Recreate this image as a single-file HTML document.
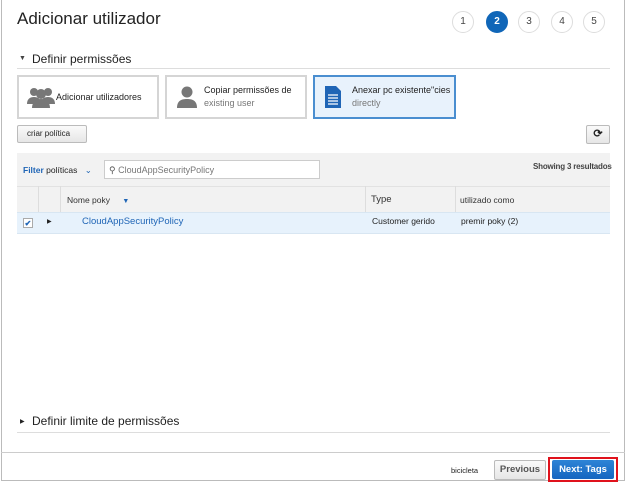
<!DOCTYPE html>
<html><head><style>
*{box-sizing:border-box}
body{margin:0;width:626px;height:482px;background:#fff;font-family:"Liberation Sans",sans-serif;color:#222;position:relative;overflow:hidden}
.a{position:absolute}
.frame{left:1px;top:-2px;width:624px;height:483px;border:1px solid #bbb}
.step{width:22px;height:22px;border-radius:50%;border:1px solid #ddd;font-size:10px;color:#444;text-align:center;line-height:20px;top:11px}
.card{top:75px;height:44px;border:2px solid #d5d5d5;background:#fff;font-size:9px}
.btn{border:1px solid #bbb;border-radius:2px;background:linear-gradient(#fafafa,#e6e6e6);font-size:8px}
.hd{font-size:8.5px;color:#333}
</style></head><body>
<div class="a frame"></div>
<div class="a" style="left:17px;top:9px;font-size:17px;color:#222">Adicionar utilizador</div>
<div class="a step" style="left:452px">1</div>
<div class="a step" style="left:486px;background:#1066b8;border-color:#1066b8;color:#fff;font-weight:bold">2</div>
<div class="a step" style="left:518px">3</div>
<div class="a step" style="left:551px">4</div>
<div class="a step" style="left:583px">5</div>

<div class="a" style="left:19px;top:55px;font-size:7px;color:#444">▼</div>
<div class="a" style="left:32px;top:52px;font-size:12px">Definir permissões</div>
<div class="a" style="left:17px;top:68px;width:593px;height:1px;background:#ddd"></div>

<div class="a card" style="left:17px;width:142px">
 <svg class="a" style="left:8px;top:9px" width="28" height="22" viewBox="0 0 28 22"><g fill="#777"><circle cx="7" cy="6" r="4"/><circle cx="21" cy="6" r="4"/><path d="M0 18c0-5 3-7 7-7s7 2 7 7z"/><path d="M14 18c0-5 3-7 7-7s7 2 7 7z"/><circle cx="14" cy="8" r="5"/><path d="M5 22c0-6 4-9 9-9s9 3 9 9z"/></g></svg>
 <div class="a" style="left:37px;top:15px">Adicionar utilizadores</div>
</div>
<div class="a card" style="left:165px;width:142px">
 <svg class="a" style="left:10px;top:9px" width="20" height="22" viewBox="0 0 20 22"><g fill="#777"><circle cx="10" cy="6" r="5.5"/><path d="M0 22c0-7 4-9 10-9s10 2 10 9z"/></g></svg>
 <div class="a" style="left:37px;top:8px">Copiar permissões de</div>
 <div class="a" style="left:37px;top:21px;color:#777">existing user</div>
</div>
<div class="a card" style="left:313px;width:143px;border-color:#4a8ed0;background:#e8f2fc">
 <svg class="a" style="left:10px;top:9px" width="16" height="22" viewBox="0 0 16 22"><path d="M0 0h11l5 5v17H0z" fill="#1f65b6"/><g stroke="#fff" stroke-width="1.3"><path d="M3 9h10M3 12h10M3 15h10M3 18h10"/></g></svg>
 <div class="a" style="left:37px;top:8px">Anexar pc existente"cies</div>
 <div class="a" style="left:37px;top:21px;color:#777">directly</div>
</div>

<div class="a btn" style="left:17px;top:125px;width:70px;height:18px;padding:3px 0 0 9px">criar política</div>
<div class="a btn" style="left:586px;top:125px;width:24px;height:19px;text-align:center;font-size:11px;line-height:16px;font-weight:bold">⟳</div>

<div class="a" style="left:17px;top:153px;width:593px;height:33px;background:#f2f2f2"></div>
<div class="a" style="left:23px;top:165px;font-size:8.5px"><b style="color:#1f65b6">Filter</b> políticas <span style="color:#1f65b6;margin-left:5px">⌄</span></div>
<div class="a" style="left:104px;top:160px;width:216px;height:19px;background:#fff;border:1px solid #ccc;font-size:9px;color:#777;padding:4px 0 0 4px"><span style="color:#555">&#9906;</span> CloudAppSecurityPolicy</div>
<div class="a" style="left:533px;top:162px;font-size:8px;font-weight:bold;color:#444;letter-spacing:-0.2px">Showing 3 resultados</div>

<div class="a" style="left:17px;top:186px;width:593px;height:26px;background:#f2f2f2;border-top:1px solid #e2e2e2"></div>
<div class="a" style="left:38px;top:186px;width:1px;height:26px;background:#ddd"></div>
<div class="a" style="left:60px;top:186px;width:1px;height:26px;background:#ddd"></div>
<div class="a" style="left:365px;top:186px;width:1px;height:26px;background:#ddd"></div>
<div class="a" style="left:455px;top:186px;width:1px;height:26px;background:#ddd"></div>
<div class="a hd" style="left:67px;top:195px">Nome poky <span style="color:#1f65b6;margin-left:10px;font-size:7px">▼</span></div>
<div class="a hd" style="left:371px;top:194px;font-size:9.5px">Type</div>
<div class="a hd" style="left:460px;top:195px">utilizado como</div>

<div class="a" style="left:17px;top:212px;width:593px;height:22px;background:#e7f2fc;border-top:1px solid #d8e6f2;border-bottom:1px solid #d8e6f2"></div>
<div class="a" style="left:23px;top:218px;width:10px;height:10px;background:#fff;border:1px solid #aaa;color:#1f65b6;font-size:8px;line-height:9px;text-align:center;font-weight:bold">✔</div>
<div class="a" style="left:47px;top:218px;font-size:6px">▶</div>
<div class="a" style="left:82px;top:216px;font-size:9.5px;color:#1f65b6">CloudAppSecurityPolicy</div>
<div class="a" style="left:372px;top:216px;font-size:8.5px">Customer gerido</div>
<div class="a" style="left:461px;top:216px;font-size:8.5px">premir poky (2)</div>

<div class="a" style="left:20px;top:418px;font-size:6px">▶</div>
<div class="a" style="left:32px;top:414px;font-size:12px">Definir limite de permissões</div>
<div class="a" style="left:17px;top:432px;width:593px;height:1px;background:#ddd"></div>
<div class="a" style="left:1px;top:452px;width:624px;height:1px;background:#ccc"></div>
<div class="a" style="left:451px;top:466px;font-size:7.5px">bicicleta</div>
<div class="a btn" style="left:494px;top:460px;width:52px;height:20px;font-size:9.5px;font-weight:bold;color:#555;text-align:center;line-height:18px">Previous</div>
<div class="a" style="left:548px;top:457px;width:70px;height:25px;border:2px solid #e0121c"></div>
<div class="a" style="left:552px;top:460px;width:62px;height:19px;background:linear-gradient(#2e84d6,#1565c0);border-radius:2px;color:#fff;font-size:9.5px;font-weight:bold;text-align:center;line-height:19px">Next: Tags</div>
</body></html>
